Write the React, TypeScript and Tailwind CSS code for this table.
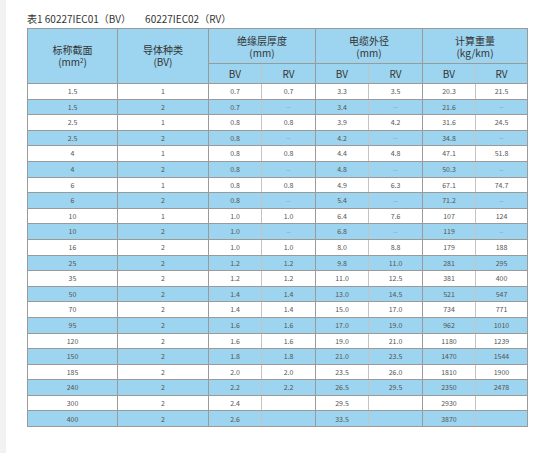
import React from 'react';

type Row = [string, string, string, string, string, string, string, string];

// 60227 IEC 01 (BV) / 60227 IEC 02 (RV) cable data
const ROWS: Row[] = [
  ['1.5', '1', '0.7', '0.7', '3.3', '3.5', '20.3', '21.5'],
  ['1.5', '2', '0.7', '—', '3.4', '—', '21.6', '—'],
  ['2.5', '1', '0.8', '0.8', '3.9', '4.2', '31.6', '24.5'],
  ['2.5', '2', '0.8', '—', '4.2', '—', '34.8', '—'],
  ['4', '1', '0.8', '0.8', '4.4', '4.8', '47.1', '51.8'],
  ['4', '2', '0.8', '—', '4.8', '—', '50.3', '—'],
  ['6', '1', '0.8', '0.8', '4.9', '6.3', '67.1', '74.7'],
  ['6', '2', '0.8', '—', '5.4', '—', '71.2', '—'],
  ['10', '1', '1.0', '1.0', '6.4', '7.6', '107', '124'],
  ['10', '2', '1.0', '—', '6.8', '—', '119', '—'],
  ['16', '2', '1.0', '1.0', '8.0', '8.8', '179', '188'],
  ['25', '2', '1.2', '1.2', '9.8', '11.0', '281', '295'],
  ['35', '2', '1.2', '1.2', '11.0', '12.5', '381', '400'],
  ['50', '2', '1.4', '1.4', '13.0', '14.5', '521', '547'],
  ['70', '2', '1.4', '1.4', '15.0', '17.0', '734', '771'],
  ['95', '2', '1.6', '1.6', '17.0', '19.0', '962', '1010'],
  ['120', '2', '1.6', '1.6', '19.0', '21.0', '1180', '1239'],
  ['150', '2', '1.8', '1.8', '21.0', '23.5', '1470', '1544'],
  ['185', '2', '2.0', '2.0', '23.5', '26.0', '1810', '1900'],
  ['240', '2', '2.2', '2.2', '26.5', '29.5', '2350', '2478'],
  ['300', '2', '2.4', '', '29.5', '', '2930', ''],
  ['400', '2', '2.6', '', '33.5', '', '3870', ''],
];

const GROUPS = [
  { title: '绝缘层厚度', unit: '(mm)' },
  { title: '电缆外径', unit: '(mm)' },
  { title: '计算重量', unit: '(kg/km)' },
];

const cell = 'border border-[#9a9a9a] p-0 text-center align-middle';

const App: React.FC = () => {
  return (
    <div
      className="flex h-[453px] w-[554px] bg-white"
      style={{ fontFamily: '"Noto Sans CJK SC", "Noto Sans", sans-serif' }}
    >
      <div className="w-[6px] shrink-0 bg-[#f2f2f2]" />
      <div className="pl-[21px] pt-[12px]">
        <div className="h-[16px] text-[10px] leading-[14px] text-[#333]">
          表1 60227IEC01（BV）<span className="ml-[14px]">60227IEC02（RV）</span>
        </div>
        <table className="table-fixed border-collapse border border-[#9a9a9a] w-[500px]">
          <colgroup>
            <col className="w-[90px]" />
            <col className="w-[91px]" />
            <col className="w-[53px]" />
            <col className="w-[54px]" />
            <col className="w-[53px]" />
            <col className="w-[54px]" />
            <col className="w-[53px]" />
            <col className="w-[52px]" />
          </colgroup>
          <thead className="bg-[#9dd4ef] text-[#333]">
            <tr className="h-[35px]">
              <th rowSpan={2} className={`${cell} font-normal text-[10px] leading-[12px]`}>
                标称截面
                <br />
                (mm<span className="relative -top-[3px] text-[6px] leading-none">2</span>)
              </th>
              <th rowSpan={2} className={`${cell} font-normal text-[10px] leading-[12px]`}>
                导体种类
                <br />
                (BV)
              </th>
              {GROUPS.map((g) => (
                <th
                  key={g.title}
                  colSpan={2}
                  className={`${cell} font-normal text-[10px] leading-[12px] pt-[1px]`}
                >
                  {g.title}
                  <br />
                  {g.unit}
                </th>
              ))}
            </tr>
            <tr className="h-[20px]">
              {GROUPS.map((g) => (
                <React.Fragment key={g.title}>
                  <th className={`${cell} border-r-[#c4c4c4] font-normal text-[10px]`}>BV</th>
                  <th className={`${cell} font-normal text-[10px]`}>RV</th>
                </React.Fragment>
              ))}
            </tr>
          </thead>
          <tbody className="text-[7px] text-[#555]">
            {ROWS.map((row, i) => (
              <tr key={i} className={`h-[15.6px] ${i % 2 === 1 ? 'bg-[#9dd4ef]' : 'bg-white'}`}>
                {row.map((v, j) => (
                  <td
                    key={j}
                    className={`${cell} ${j >= 2 && j % 2 === 0 ? 'border-r-[#c4c4c4]' : ''} ${
                      v === '—' ? 'text-[5px] text-[#8a8a8a]' : ''
                    }`}
                  >
                    {v}
                  </td>
                ))}
              </tr>
            ))}
          </tbody>
        </table>
      </div>
    </div>
  );
};

export default App;
